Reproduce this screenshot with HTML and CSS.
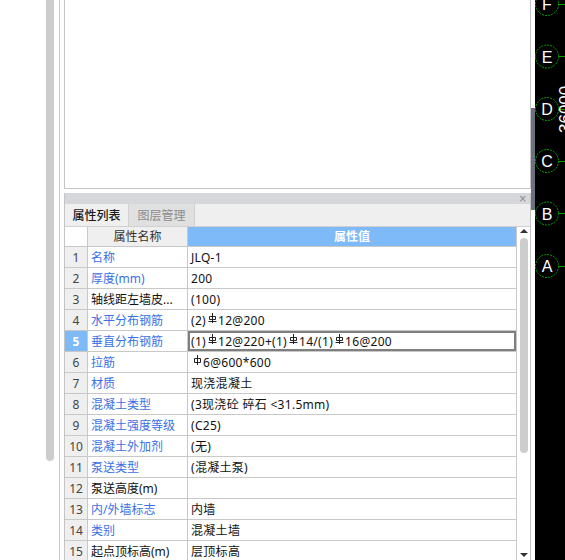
FILE: index.html
```html
<!DOCTYPE html>
<html>
<head>
<meta charset="utf-8">
<link rel="stylesheet" href="styles.css">
</head>
<body>
<div class="app">
  <div class="lefttrack"><div class="lthumb"></div></div>
  <div class="vline"></div>
  <div class="main">
    <div class="viewport"></div>
    <div class="props">
      <div class="titlebar"><span class="close">×</span></div>
      <div class="tabs">
        <div class="tab active">属性列表</div>
        <div class="tab inactive">图层管理</div>
      </div>
      <div class="gridwrap">
        <div class="grid">
          <div class="row head"><div class="num"></div><div class="name">属性名称</div><div class="val">属性值</div></div>
          <div class="row"><div class="num">1</div><div class="name blue">名称</div><div class="val">JLQ-1</div></div>
          <div class="row"><div class="num">2</div><div class="name blue">厚度(mm)</div><div class="val">200</div></div>
          <div class="row"><div class="num">3</div><div class="name">轴线距左墙皮...</div><div class="val">(100)</div></div>
          <div class="row"><div class="num">4</div><div class="name blue">水平分布钢筋</div><div class="val">(2)<svg class="sym" viewBox="0 0 9 10"><path d="M4.5 0V10M1.5 3.5H7.5V6.5H1.5Z M0.5 8.5H8.5" fill="none" stroke="#222" stroke-width="1"/></svg>12@200</div></div>
          <div class="row sel"><div class="num">5</div><div class="name blue">垂直分布钢筋</div><div class="val">(1)<svg class="sym" viewBox="0 0 9 10"><path d="M4.5 0V10M1.5 3.5H7.5V6.5H1.5Z M0.5 8.5H8.5" fill="none" stroke="#222" stroke-width="1"/></svg>12@220+(1)<svg class="sym" viewBox="0 0 9 10"><path d="M4.5 0V10M1.5 3.5H7.5V6.5H1.5Z M0.5 8.5H8.5" fill="none" stroke="#222" stroke-width="1"/></svg>14/(1)<svg class="sym" viewBox="0 0 9 10"><path d="M4.5 0V10M1.5 3.5H7.5V6.5H1.5Z M0.5 8.5H8.5" fill="none" stroke="#222" stroke-width="1"/></svg>16@200</div></div>
          <div class="row"><div class="num">6</div><div class="name blue">拉筋</div><div class="val"><svg class="sym" viewBox="0 0 9 10"><path d="M4.5 0V10M1.5 3.5H7.5V7.5H1.5Z" fill="none" stroke="#222" stroke-width="1"/></svg>6@600*600</div></div>
          <div class="row"><div class="num">7</div><div class="name blue">材质</div><div class="val">现浇混凝土</div></div>
          <div class="row"><div class="num">8</div><div class="name blue">混凝土类型</div><div class="val">(3现浇砼 碎石 &lt;31.5mm)</div></div>
          <div class="row"><div class="num">9</div><div class="name blue">混凝土强度等级</div><div class="val">(C25)</div></div>
          <div class="row"><div class="num">10</div><div class="name blue">混凝土外加剂</div><div class="val">(无)</div></div>
          <div class="row"><div class="num">11</div><div class="name blue">泵送类型</div><div class="val">(混凝土泵)</div></div>
          <div class="row"><div class="num">12</div><div class="name">泵送高度(m)</div><div class="val"></div></div>
          <div class="row"><div class="num">13</div><div class="name blue">内/外墙标志</div><div class="val">内墙</div></div>
          <div class="row"><div class="num">14</div><div class="name blue">类别</div><div class="val">混凝土墙</div></div>
          <div class="row"><div class="num">15</div><div class="name">起点顶标高(m)</div><div class="val">层顶标高</div></div>
        </div>
        <div class="vscroll">
          <span class="arrow up"></span>
          <div class="vthumb"></div>
          <span class="arrow down"></span>
        </div>
      </div>
    </div>
  </div>
  <div class="strip"><div class="stripthumb"></div></div>
  <div class="canvas">
    <svg class="axes" width="30" height="560" viewBox="0 0 30 560">
      <g fill="none" stroke="#00a000" stroke-width="1" stroke-dasharray="2 1">
        <circle cx="12" cy="4" r="11.5"/>
        <circle cx="12" cy="56.5" r="11.5"/>
        <circle cx="12" cy="109" r="11.5"/>
        <circle cx="12" cy="161" r="11.5"/>
        <circle cx="12" cy="213.5" r="11.5"/>
        <circle cx="12" cy="266" r="11.5"/>
      </g>
      <g stroke="#00a000" stroke-width="1">
        <path d="M23.5 4.5H30M23.5 56.5H30M23.5 109.5H30M23.5 161.5H30M23.5 213.5H30M23.5 266.5H30"/>
      </g>
      <g fill="#fff" font-family="Liberation Sans, sans-serif" font-size="16" text-anchor="middle">
        <text x="12" y="10">F</text>
        <text x="12" y="62.5">E</text>
        <text x="12" y="115">D</text>
        <text x="12" y="167">C</text>
        <text x="12" y="219.5">B</text>
        <text x="12" y="272">A</text>
      </g>
      <text fill="#fff" font-family="Liberation Sans, sans-serif" font-size="17" transform="translate(36 133) rotate(-90)">36000</text>
    </svg>
  </div>
</div>
</body>
</html>
```
FILE: styles.css
```css
* { box-sizing: border-box; }
html, body { margin: 0; padding: 0; background: #fff; overflow: hidden; }
body {
  width: 565px;
  height: 560px;
  font-family: "Noto Sans", "Noto Sans CJK SC", sans-serif;
  font-size: 12px;
  color: #111;
}
.app { display: flex; height: 560px; }
.lefttrack { width: 59px; flex: none; }
.lthumb {
  margin-left: 46px;
  width: 8px;
  height: 461px;
  background: #cdcdcd;
  border-radius: 0 0 4px 4px;
}
.vline { width: 1px; flex: none; background: #c9c9c9; margin-right: 4px; }
.main { width: 467px; flex: none; display: flex; flex-direction: column; }
.viewport {
  height: 189px;
  border: 1px solid #c4c4c4;
  border-top: none;
  background: #fff;
  flex: none;
}
.props {
  margin-top: 4px;
  flex: 1;
  border-left: 1px solid #c4c4c4;
  border-right: 1px solid #c4c4c4;
  display: flex;
  flex-direction: column;
  min-height: 0;
}
.titlebar {
  height: 11px;
  background: #d6d7db;
  display: flex;
  justify-content: flex-end;
  align-items: center;
  flex: none;
}
.close {
  color: #8a8a8a;
  font-family: "DejaVu Sans", sans-serif;
  font-size: 10px;
  line-height: 10px;
  margin-right: 3px;
}
.tabs {
  height: 23px;
  background: #efefef;
  border-bottom: 1px solid #d0d0d0;
  display: flex;
  flex: none;
}
.tab {
  width: 64px;
  line-height: 22px;
  text-align: center;
  font-family: "Noto Sans CJK SC", sans-serif;
  border-right: 1px solid #d0d0d0;
}
.tab.active { color: #1a1a1a; font-weight: 500; }
.tab.inactive { width: 66px; background: #e0e0e0; color: #8c8c8c; }
.gridwrap { display: flex; flex: 1; min-height: 0; }
.grid { width: 452px; flex: none; }
.row {
  display: grid;
  grid-template-columns: 22px 100px 330px;
  height: 21px;
}
.row > div {
  border-bottom: 1px solid #c8c8c8;
  line-height: 21px;
  white-space: nowrap;
  overflow: hidden;
}
.num {
  background: #efefef;
  text-align: center;
  color: #444;
}
.name {
  border-left: 1px solid #c8c8c8;
  padding-left: 3px;
  color: #111;
}
.name.blue { color: #3a6fe6; }
.val {
  border-left: 1px solid #c8c8c8;
  border-right: 1px solid #c8c8c8;
  padding-left: 3px;
  letter-spacing: 0.3px;
}
.row.head { height: 20px; }
.row.head > div { line-height: 19px; border-bottom-color: #c8c8c8; }
.row.head .num { background: #fff; }
.row.head .name { background: #efefef; text-align: center; color: #333; padding-left: 0; }
.row.head .val { background: #7eb9f8; color: #fff; font-weight: 700; text-align: center; padding-left: 0; letter-spacing: 0; }
.row.sel .num { background: #7eb9f8; color: #fff; font-weight: 700; }
.row.sel .val { box-shadow: inset 0 0 0 2px #7f7f7f; }
.sym {
  width: 9px;
  height: 10px;
  vertical-align: 2px;
  margin: 0 1px 0 2px;
}
.vscroll {
  flex: 1;
  display: flex;
  flex-direction: column;
  align-items: center;
  padding-top: 2px;
}
.arrow { width: 0; height: 0; border-left: 4px solid transparent; border-right: 4px solid transparent; }
.arrow.up { border-bottom: 4px solid #333; }
.arrow.down { border-top: 4px solid #333; margin-top: auto; margin-bottom: 3px; }
.vthumb {
  width: 8px;
  height: 215px;
  margin-top: 5px;
  background: #cdcdcd;
  border-radius: 4px;
}
.strip { width: 4px; flex: none; }
.stripthumb { margin-top: 108px; height: 102px; background: #6b727d; }
.canvas { flex: 1; background: #000; overflow: hidden; }
.axes { display: block; }
```
